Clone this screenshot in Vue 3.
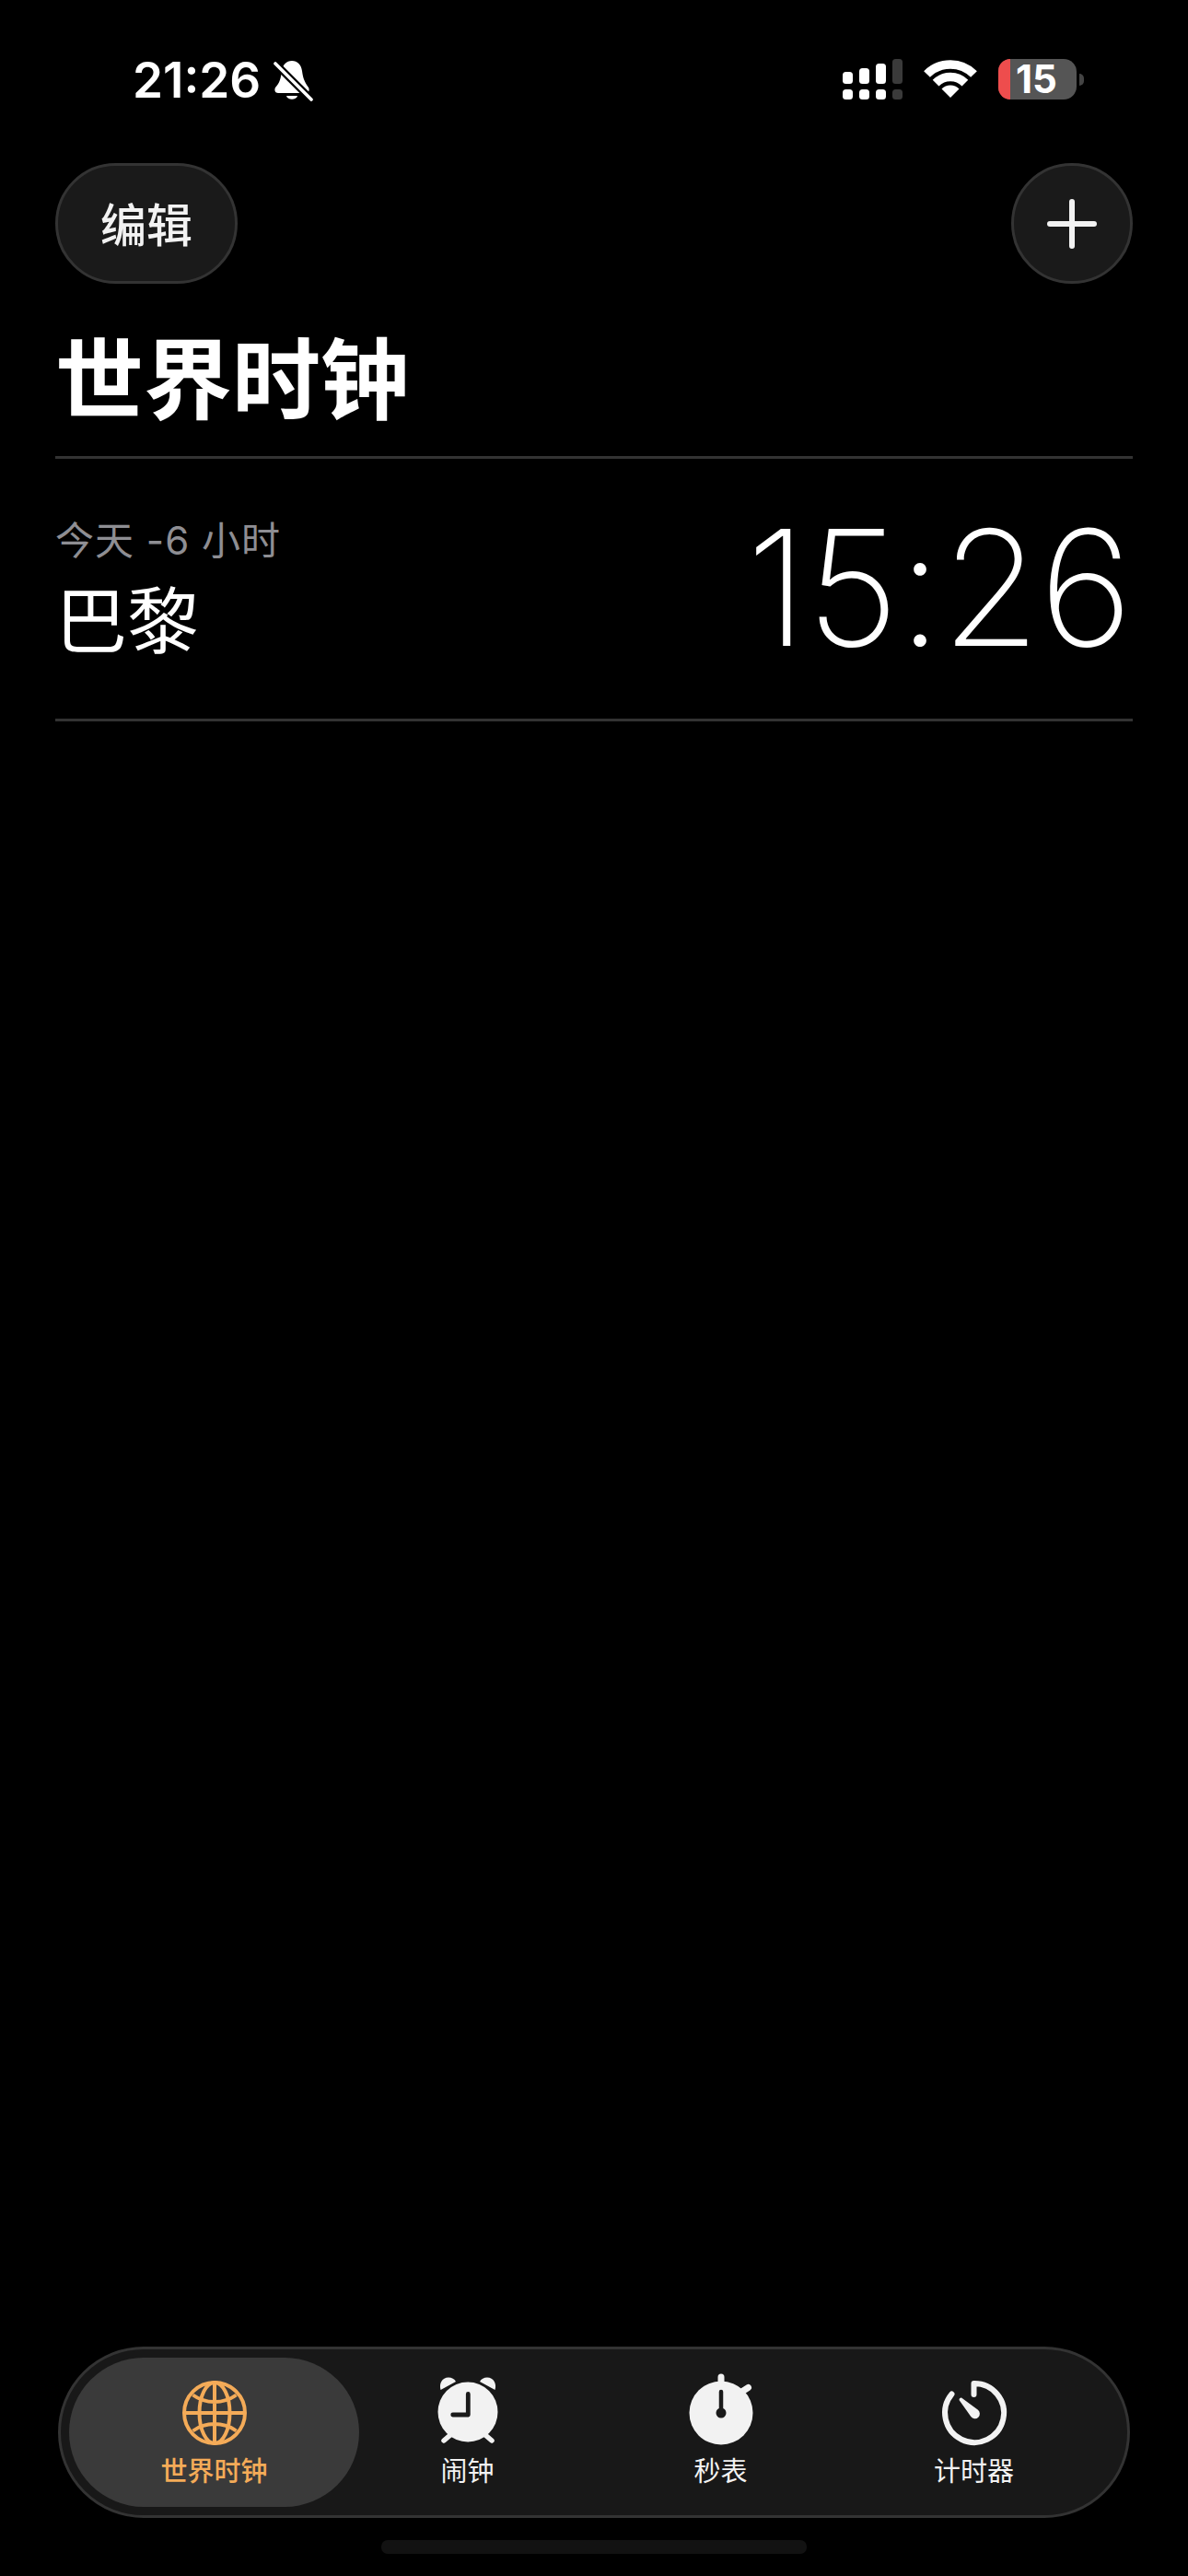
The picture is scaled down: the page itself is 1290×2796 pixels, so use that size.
<template>
  <div class="phone">
    <div class="status">
      <div class="status-left">
        <span class="clock">21:26</span>
        <svg class="bell" width="44" height="46" viewBox="0 0 44 46">
          <path d="M20 0C26 0 30 4 31 11C32 18 33 22 38 29C39.500 32 38 35 35 35H5C2 35 .5 32 2 29C7 24 8 18 9 11C10 4 14 0 20 0Z" fill="#fff" />
          <path d="M14 38H26C25 43 15 43 14 38Z" fill="#fff" />
          <path d="M1 2L43 44" stroke="#000" stroke-width="8" />
          <path d="M2 3L41 42" stroke="#fff" stroke-width="3.600" stroke-linecap="round" />
        </svg>
      </div>
      <div class="status-right">
        <svg class="signal" width="65" height="44" viewBox="0 0 65 44">
          <rect x="0" y="14" width="11" height="13" rx="3.500" fill="#fff" />
          <rect x="18" y="10" width="11" height="17" rx="3.500" fill="#fff" />
          <rect x="36" y="5" width="11" height="22" rx="3.500" fill="#fff" />
          <rect x="54" y="0" width="11" height="27" rx="3.500" fill="#3a3a3a" />
          <rect x="0" y="33" width="11" height="11" rx="3.500" fill="#fff" />
          <rect x="18" y="33" width="11" height="11" rx="3.500" fill="#fff" />
          <rect x="36" y="33" width="11" height="11" rx="3.500" fill="#fff" />
          <rect x="54" y="33" width="11" height="11" rx="3.500" fill="#3a3a3a" />
        </svg>
        <svg class="wifi" width="58" height="42" viewBox="0 0 58 42">
          <path d="M3.500 15.500A36 36 0 0 1 54.500 15.500" fill="none" stroke="#fff" stroke-width="9.500" />
          <path d="M13.100 25.100A22.500 22.500 0 0 1 44.900 25.100" fill="none" stroke="#fff" stroke-width="9.500" />
          <path d="M29 41L19.500 31.500A13.400 13.400 0 0 1 38.500 31.500Z" fill="#fff" />
        </svg>
        <div class="battery">
          <div class="battery-body">
            <div class="battery-low"></div>
            <span class="battery-num">15</span>
          </div>
          <div class="battery-nub"></div>
        </div>
      </div>
    </div>

    <div class="toolbar">
      <button class="round-btn edit">编辑</button>
      <button class="round-btn add">
        <svg width="54" height="54" viewBox="0 0 54 54">
          <path d="M27 3V51M3 27H51" stroke="#f2f2f2" stroke-width="6" stroke-linecap="round" />
        </svg>
      </button>
    </div>

    <h1 class="title">世界时钟</h1>

    <div class="city-row">
      <div class="city-info">
        <div class="offset">今天 -6 小时</div>
        <div class="city">巴黎</div>
      </div>
      <div class="city-time">15:26</div>
    </div>

    <div class="spacer"></div>

    <nav class="tabbar">
      <div v-for="tab in tabs" :key="tab.id" class="tab" :class="{ active: tab.id === 'world' }">
        <svg class="tab-icon" width="80" height="80" viewBox="0 0 80 80">
          <g v-if="tab.id === 'world'" fill="none" stroke="#f4ab58" stroke-width="4">
            <circle cx="40" cy="40" r="33" />
            <ellipse cx="40" cy="40" rx="16.500" ry="33" />
            <path d="M40 7V73M7 40H73M16.500 20.500C30 30.500 50 30.500 63.500 20.500M16.500 59.500C30 49.500 50 49.500 63.500 59.500" />
          </g>
          <g v-else-if="tab.id === 'alarm'">
            <circle cx="40" cy="39" r="32.500" fill="#f2f2f2" />
            <path d="M10.500 15C8.500 8 12 1.500 19 1.500C22.500 1.500 25.500 3 27 6Z" fill="#f2f2f2" />
            <path d="M69.500 15C71.500 8 68 1.500 61 1.500C57.500 1.500 54.500 3 53 6Z" fill="#f2f2f2" />
            <path d="M14 70L21 64M66 70L59 64" stroke="#f2f2f2" stroke-width="5.500" stroke-linecap="round" />
            <path d="M40.300 19.500V42H23.700" fill="none" stroke="#1a1a1a" stroke-width="4.800" stroke-linecap="round" stroke-linejoin="round" />
          </g>
          <g v-else-if="tab.id === 'stopwatch'">
            <path d="M40 1V10M64 16L69.500 12.500" stroke="#f2f2f2" stroke-width="7" stroke-linecap="round" />
            <circle cx="40" cy="40" r="34.500" fill="#f2f2f2" />
            <path d="M40 17V40" stroke="#1a1a1a" stroke-width="4.500" stroke-linecap="round" />
            <circle cx="40" cy="40" r="5.500" fill="#1a1a1a" />
          </g>
          <g v-else>
            <path d="M39.500 20V8A32 32 0 1 1 15.500 19.500" fill="none" stroke="#f2f2f2" stroke-width="6" stroke-linecap="round" stroke-linejoin="round" />
            <path d="M26 23.500L43.700 36.600A5.300 5.300 0 1 1 36.300 44L23.500 26Q23.500 23 26 23.500Z" fill="#f2f2f2" />
          </g>
        </svg>
        <span class="tab-label">{{ tab.label }}</span>
      </div>
    </nav>

    <div class="home-bar"></div>
  </div>
</template>

<script setup>
const tabs = [
  { id: 'world', label: '世界时钟' },
  { id: 'alarm', label: '闹钟' },
  { id: 'stopwatch', label: '秒表' },
  { id: 'timer', label: '计时器' },
]
</script>

<style>
html,
body {
  margin: 0;
  background: #000;
}
</style>

<style scoped>
.phone {
  width: 1290px;
  height: 2796px;
  background: #000;
  color: #fff;
  display: flex;
  flex-direction: column;
  overflow: hidden;
  font-family: Inter, "Noto Sans CJK SC", sans-serif;
}

.status {
  height: 177px;
  box-sizing: border-box;
  display: flex;
  justify-content: space-between;
  padding: 56px 113px 0 144px;
  align-items: flex-start;
}

.status-left {
  display: flex;
  align-items: center;
  gap: 14px;
}

.clock {
  font-size: 53px;
  font-weight: 600;
  line-height: 62px;
}

.bell {
  margin-top: 4px;
}

.status-right {
  display: flex;
  align-items: center;
  padding-top: 8px;
}

.wifi {
  margin-left: 23px;
}

.battery {
  margin-left: 23px;
  display: flex;
  align-items: center;
  gap: 3px;
}

.battery-body {
  width: 85px;
  height: 44px;
  border-radius: 14px;
  background: #555;
  display: flex;
  align-items: center;
}

.battery-low {
  width: 13px;
  height: 100%;
  background: #ee4d4d;
  border-radius: 14px 0 0 14px;
}

.battery-num {
  margin-left: 6px;
  font-size: 42px;
  font-weight: 700;
  line-height: 44px;
}

.battery-nub {
  width: 5px;
  height: 13px;
  background: #444;
  border-radius: 0 5px 5px 0;
}

.toolbar {
  display: flex;
  justify-content: space-between;
  padding: 0 60px;
}

.round-btn {
  height: 131px;
  box-sizing: border-box;
  border: 3px solid #333;
  background: #1a1a1a;
  border-radius: 66px;
  color: #f2f2f2;
  padding: 0;
  display: flex;
  align-items: center;
  justify-content: center;
  font-family: inherit;
}

.edit {
  width: 198px;
  font-size: 50px;
  font-weight: 500;
  padding-bottom: 3px;
}

.add {
  width: 132px;
}

.title {
  margin: 0 60px;
  padding: 48px 0 27px 0;
  font-size: 96px;
  line-height: 112px;
  font-weight: 700;
  border-bottom: 3px solid #333;
}

.city-row {
  margin: 0 60px;
  height: 285px;
  box-sizing: border-box;
  border-bottom: 3px solid #333;
  display: flex;
  justify-content: space-between;
}

.offset {
  margin-top: 59px;
  font-size: 42px;
  line-height: 60px;
  letter-spacing: 1px;
  color: #8e8e93;
}

.city {
  margin-top: 8px;
  font-size: 78px;
  line-height: 100px;
}

.city-time {
  font-size: 174px;
  font-weight: 200;
  line-height: 212px;
  letter-spacing: -1px;
  margin-top: 34px;
  margin-right: 1px;
}

.spacer {
  flex: 1;
}

.tabbar {
  margin: 0 63px;
  height: 186px;
  box-sizing: border-box;
  border: 3px solid #333;
  border-radius: 93px;
  background: #181818;
  display: flex;
  padding: 9px 0 0 29px;
}

.tab {
  width: 275px;
  height: 162px;
  box-sizing: border-box;
  padding-top: 20px;
  display: flex;
  flex-direction: column;
  align-items: center;
  color: #f2f2f2;
}

.tab.active {
  width: 315px;
  margin: 0 -20px;
  background: #3a3a3a;
  border-radius: 81px;
  color: #f4ab58;
  font-weight: 500;
}

.tab-icon {
  overflow: visible;
  flex: none;
}

.tab-label {
  margin-top: 6px;
  font-size: 29px;
  line-height: 36px;
}

.home-bar {
  width: 462px;
  height: 15px;
  margin: 24px auto 24px;
  border-radius: 7px;
  background: #121212;
  flex: none;
}
</style>
